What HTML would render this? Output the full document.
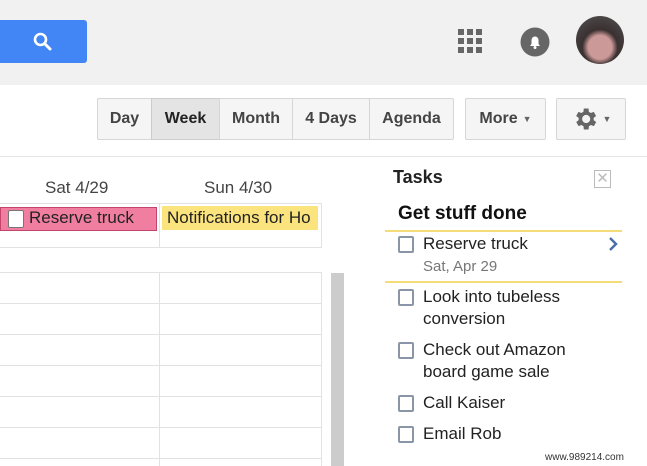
<!DOCTYPE html><html><head><style>
*{margin:0;padding:0;box-sizing:border-box}
body{width:647px;height:466px;overflow:hidden;background:#fff;font-family:"Liberation Sans",Arial,sans-serif;position:relative;color:#222}
.a{position:absolute}
.btn{position:absolute;top:98px;height:42px;border:1px solid #d6d6d6;background:#f5f5f5;font-weight:bold;font-size:16px;color:#444;display:flex;align-items:center;justify-content:center}
.cb{position:absolute;left:398px;width:16px;height:17px;border:2px solid #8a96a8;border-radius:2px}
.t{position:absolute;left:423px;font-size:17px;color:#222;line-height:22px}
.h{position:absolute;left:0;width:322px;height:1px;background:#e2e2e2}
</style></head><body>
<div class="a" style="left:0;top:0;width:647px;height:85px;background:#f1f1f1"></div>
<div class="a" style="left:0;top:20px;width:87px;height:43px;background:#4285f4;border-radius:0 3px 3px 0"></div>
<svg class="a" style="left:31px;top:30px" width="24" height="24" viewBox="0 0 24 24"><circle cx="9.5" cy="9.5" r="5.5" stroke="#fff" stroke-width="2.6" fill="none"/><path d="M13.5 13.5L19 19" stroke="#fff" stroke-width="3" stroke-linecap="round"/></svg>
<svg class="a" style="left:458px;top:29px" width="24" height="24"><g fill="#666"><rect x="0" y="0" width="6" height="6"/><rect x="9" y="0" width="6" height="6"/><rect x="18" y="0" width="6" height="6"/><rect x="0" y="9" width="6" height="6"/><rect x="9" y="9" width="6" height="6"/><rect x="18" y="9" width="6" height="6"/><rect x="0" y="18" width="6" height="6"/><rect x="9" y="18" width="6" height="6"/><rect x="18" y="18" width="6" height="6"/></g></svg>
<svg class="a" style="left:520px;top:27px" width="30" height="30"><circle cx="15" cy="15" r="14.5" fill="#666"/><path d="M10 19h10l-1.5-2v-4a3.5 3.5 0 0 0-7 0v4z" fill="#fff"/><circle cx="15" cy="20.5" r="1.5" fill="#fff"/></svg>
<div class="a" style="left:576px;top:16px;width:48px;height:48px;border-radius:50%;background:radial-gradient(circle at 50% 65%,#c99 0 30%,#3a3030 45%,#555 100%)"></div>
<div class="btn" style="left:97px;width:55px;border-radius:2px 0 0 2px">Day</div>
<div class="btn" style="left:151px;width:69px;background:#e4e4e4;color:#222;border-color:#ccc">Week</div>
<div class="btn" style="left:219px;width:74px">Month</div>
<div class="btn" style="left:292px;width:78px">4 Days</div>
<div class="btn" style="left:369px;width:85px;border-radius:0 2px 2px 0">Agenda</div>
<div class="btn" style="left:465px;width:81px;border-radius:2px">More <span style="font-size:9px;margin-left:5px;color:#666">▼</span></div>
<div class="btn" style="left:556px;width:70px;border-radius:2px"><svg width="28" height="28" viewBox="0 0 24 24"><path fill="#666" d="M19.4 13a7.5 7.5 0 0 0 0-2l2.1-1.6-2-3.5-2.5 1a7 7 0 0 0-1.7-1L15 3h-4l-.4 2.9a7 7 0 0 0-1.7 1l-2.5-1-2 3.5L6.6 11a7.5 7.5 0 0 0 0 2l-2.1 1.6 2 3.5 2.5-1a7 7 0 0 0 1.7 1L11 21h4l.4-2.9a7 7 0 0 0 1.7-1l2.5 1 2-3.5zM13 15.5a3.5 3.5 0 1 1 0-7 3.5 3.5 0 0 1 0 7z"/></svg><span style="font-size:9px;margin-left:4px;color:#666">▼</span></div>
<div class="a" style="left:0;top:156px;width:647px;height:1px;background:#e5e5e5"></div>
<div class="a" style="left:45px;top:178px;font-size:17px;color:#444">Sat 4/29</div>
<div class="a" style="left:204px;top:178px;font-size:17px;color:#444">Sun 4/30</div>
<div class="a" style="left:0;top:203px;width:322px;height:45px;border:1px solid #e2e2e2;border-left:none"></div>
<div class="a" style="left:159px;top:203px;width:1px;height:45px;background:#e2e2e2"></div>
<div class="a" style="left:0;top:207px;width:157px;height:24px;background:#f07ea0;border:1px solid #c4456c"></div>
<div class="a" style="left:8px;top:210px;width:16px;height:18px;background:#fff;border:1px solid #777;border-radius:2px"></div>
<div class="a" style="left:29px;top:208px;font-size:17px;color:#222">Reserve truck</div>
<div class="a" style="left:162px;top:206px;width:156px;height:24px;background:#fbe37d;overflow:hidden;white-space:nowrap;padding:2px 0 0 5px;font-size:17px;color:#222">Notifications for Ho</div>
<div class="a" style="left:0;top:272px;width:322px;height:194px;border-top:1px solid #e2e2e2;border-right:1px solid #e2e2e2"></div>
<div class="a" style="left:159px;top:272px;width:1px;height:194px;background:#e2e2e2"></div>
<div class="h" style="top:303px"></div><div class="h" style="top:334px"></div><div class="h" style="top:365px"></div><div class="h" style="top:396px"></div><div class="h" style="top:427px"></div><div class="h" style="top:458px"></div>
<div class="a" style="left:331px;top:273px;width:13px;height:193px;background:#ccc"></div>
<div class="a" style="left:393px;top:167px;font-size:18px;font-weight:bold;color:#222">Tasks</div>
<div class="a" style="left:594px;top:170px;width:17px;height:18px;border:1px solid #bbb;color:#bbb;font-size:15px;line-height:15px;text-align:center">✕</div>
<div class="a" style="left:398px;top:203px;font-size:19px;font-weight:bold;color:#111">Get stuff done</div>
<div class="a" style="left:385px;top:230px;width:237px;height:2px;background:#f6dc78"></div>
<div class="a" style="left:385px;top:281px;width:237px;height:2px;background:#f6dc78"></div>
<div class="cb" style="top:236px"></div><div class="t" style="top:233px">Reserve truck</div>
<div class="t" style="top:256px;font-size:15px;color:#777">Sat, Apr 29</div>
<svg class="a" style="left:608px;top:236px" width="12" height="16"><path d="M2 2l6 6-6 6" stroke="#4a6fa8" stroke-width="2.5" fill="none"/></svg>
<div class="cb" style="top:289px"></div><div class="t" style="top:286px">Look into tubeless<br>conversion</div>
<div class="cb" style="top:342px"></div><div class="t" style="top:339px">Check out Amazon<br>board game sale</div>
<div class="cb" style="top:395px"></div><div class="t" style="top:392px">Call Kaiser</div>
<div class="cb" style="top:426px"></div><div class="t" style="top:423px">Email Rob</div>
<div class="a" style="left:545px;top:452px;font-size:10px;color:#333">www.989214.com</div>
</body></html>
